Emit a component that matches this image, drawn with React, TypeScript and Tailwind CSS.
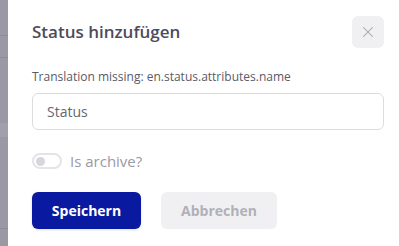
import { X } from 'lucide-react';

export default function App() {
  return (
    <div className="flex h-[246px] w-[399px] overflow-hidden bg-white font-['Open_Sans',sans-serif]">
      {/* backdrop strip */}
      <div className="flex w-[8px] flex-col bg-[#9b98a6]">
        <div className="h-[35px]" />
        <div className="h-px bg-[#8d8a99]" />
        <div className="h-[21px]" />
        <div className="h-px bg-[#8d8a99]" />
        <div className="h-[65px]" />
        <div className="h-[14px] bg-[#a29fac]" />
        <div className="flex-1" />
        <div className="h-px bg-[#8d8a99]" />
        <div className="h-[17px]" />
      </div>

      <div className="flex-1 pl-6 pr-[15px] pt-4">
        <div className="flex items-center justify-between">
          <h2 className="text-[17px] font-semibold leading-6 text-[#4d4b5b]">Status hinzufügen</h2>
          <button className="flex h-8 w-8 items-center justify-center rounded-md bg-[#f0f0f2] text-[#a3a3ab]">
            <X size={18} strokeWidth={1.4} />
          </button>
        </div>

        <div className="mt-[21px] text-[12px] leading-4 text-[#5a5a66]">
          Translation missing: en.status.attributes.name
        </div>
        <input
          className="mt-2 h-[37px] w-full rounded-md border border-[#dcdce0] px-[14px] text-[14px] text-[#55555f] outline-none placeholder:text-[#66666f]"
          placeholder="Status"
        />

        <div className="mt-5 flex items-center gap-[8px]">
          <div className="flex h-4 w-[30px] items-center rounded-full border-2 border-[#e4e4e8] px-[2px]">
            <div className="h-[9px] w-[9px] rounded-full bg-[#d6d6dc]" />
          </div>
          <span className="text-[15px] text-[#9a9aa4]">Is archive?</span>
        </div>

        <div className="mt-[19px] flex gap-5">
          <button className="h-[37px] w-[109px] rounded-md bg-[#0a1aa0] text-[14px] font-bold text-white shadow-sm">
            Speichern
          </button>
          <button className="h-[37px] w-[116px] rounded-md bg-[#f0f0f2] text-[14px] font-bold text-[#b0b0b8]">
            Abbrechen
          </button>
        </div>
      </div>
    </div>
  );
}
